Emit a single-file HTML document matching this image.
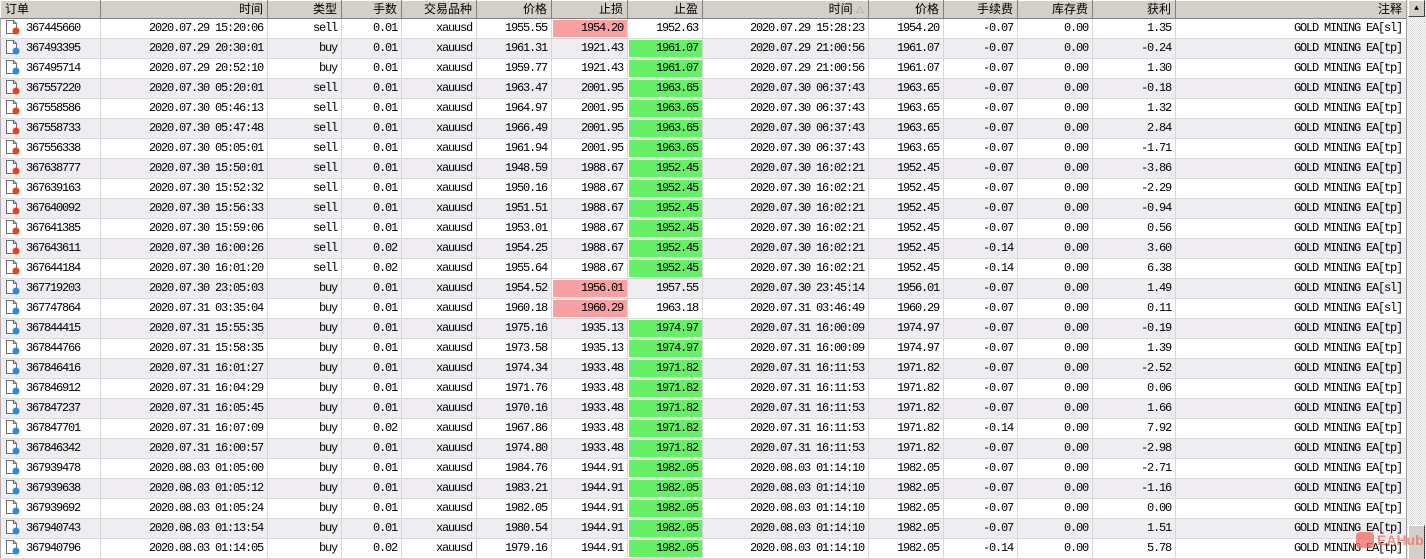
<!DOCTYPE html>
<html><head><meta charset="utf-8"><style>
body{margin:0;width:1426px;height:559px;overflow:hidden;background:#fff;font-family:"Liberation Mono","Noto Sans CJK SC",monospace;font-size:12px;letter-spacing:-1.2px;color:#000;position:relative}
table{border-collapse:collapse;table-layout:fixed;position:absolute;left:0;top:0;width:1406px}
th{height:17px;padding:0 4px 0 0;background:#d4d0c8;border-top:1px solid #fff;border-left:1px solid #fff;border-right:1px solid #808080;border-bottom:1px solid #808080;font-family:"Liberation Sans","Noto Sans CJK SC",sans-serif;font-weight:normal;font-size:12px;letter-spacing:0;text-align:right;line-height:15px}
th.l{text-align:left;padding-left:4px}
td{height:19px;padding:0 4px 0 0;border-right:1px solid #d8d8d8;border-bottom:1px solid #d8d8d8;text-align:right;white-space:nowrap;overflow:hidden;line-height:19px;background:#fff}
tbody tr:nth-child(even) td{background:#efedf2}
td.o{text-align:left;padding-left:4px;border-left:1px solid #b0b0b0}
td.o svg{vertical-align:-4px;margin-right:5px}
td.pk{background:#f8a0a2!important;box-shadow:inset 0 1px 0 #fff,inset 0 -1px 0 #fff,inset 1px 0 0 #fff}
td.gr{background:#66f066!important;box-shadow:inset 0 1px 0 #fff,inset 0 -1px 0 #fff,inset 1px 0 0 #fff}
.sb{position:absolute;left:1406px;top:0;width:20px;height:559px;background:repeating-conic-gradient(#d8d8d8 0 25%,#fff 0 50%) 0 0/2px 2px;border-left:1px solid #a0a0a0}
.up{position:absolute;left:1px;top:0;width:17px;height:17px;background:#d4d0c8;border-top:1px solid #fff;border-left:1px solid #fff;border-right:1px solid #404040;border-bottom:1px solid #404040;box-sizing:border-box;font-size:8px;text-align:center;line-height:15px;letter-spacing:0}
.th{position:absolute;left:1px;top:525px;width:17px;height:34px;background:#d4d0c8;border-top:1px solid #fff;border-left:1px solid #fff;border-right:1px solid #404040;box-sizing:border-box}
.wm{position:absolute;left:1356px;top:532px;color:#f26a5a;opacity:.75;font-family:"Liberation Sans",sans-serif;font-size:14px;font-weight:bold;letter-spacing:0}
</style></head><body>
<svg width="0" height="0" style="position:absolute"><defs>
<g id="d"><path d="M1.5 0.5h7l3 3v10h-10z" fill="#fff" stroke="#707070"/><path d="M8.5 0.5v3h3" fill="none" stroke="#707070"/></g>
</defs></svg>
<table>
<colgroup><col style="width:100px"><col style="width:167px"><col style="width:74px"><col style="width:60px"><col style="width:75px"><col style="width:75px"><col style="width:76px"><col style="width:75px"><col style="width:166px"><col style="width:75px"><col style="width:74px"><col style="width:75px"><col style="width:83px"><col style="width:231px"></colgroup>
<thead><tr><th class="l">订单</th><th>时间</th><th>类型</th><th>手数</th><th>交易品种</th><th>价格</th><th>止损</th><th>止盈</th><th>时间 <span style="font-size:8px;color:#808080">△</span></th><th>价格</th><th>手续费</th><th>库存费</th><th>获利</th><th>注释</th></tr></thead>
<tbody>
<tr><td class="o"><svg width="16" height="15"><use href="#d"/><circle cx="11" cy="11" r="3.5" fill="#e8401a"/></svg>367445660</td><td>2020.07.29 15:20:06</td><td>sell</td><td>0.01</td><td>xauusd</td><td>1955.55</td><td class="pk">1954.20</td><td>1952.63</td><td>2020.07.29 15:28:23</td><td>1954.20</td><td>-0.07</td><td>0.00</td><td>1.35</td><td>GOLD MINING EA[sl]</td></tr>
<tr><td class="o"><svg width="16" height="15"><use href="#d"/><circle cx="11" cy="11" r="3.5" fill="#2a8ae0"/></svg>367493395</td><td>2020.07.29 20:30:01</td><td>buy</td><td>0.01</td><td>xauusd</td><td>1961.31</td><td>1921.43</td><td class="gr">1961.07</td><td>2020.07.29 21:00:56</td><td>1961.07</td><td>-0.07</td><td>0.00</td><td>-0.24</td><td>GOLD MINING EA[tp]</td></tr>
<tr><td class="o"><svg width="16" height="15"><use href="#d"/><circle cx="11" cy="11" r="3.5" fill="#2a8ae0"/></svg>367495714</td><td>2020.07.29 20:52:10</td><td>buy</td><td>0.01</td><td>xauusd</td><td>1959.77</td><td>1921.43</td><td class="gr">1961.07</td><td>2020.07.29 21:00:56</td><td>1961.07</td><td>-0.07</td><td>0.00</td><td>1.30</td><td>GOLD MINING EA[tp]</td></tr>
<tr><td class="o"><svg width="16" height="15"><use href="#d"/><circle cx="11" cy="11" r="3.5" fill="#e8401a"/></svg>367557220</td><td>2020.07.30 05:20:01</td><td>sell</td><td>0.01</td><td>xauusd</td><td>1963.47</td><td>2001.95</td><td class="gr">1963.65</td><td>2020.07.30 06:37:43</td><td>1963.65</td><td>-0.07</td><td>0.00</td><td>-0.18</td><td>GOLD MINING EA[tp]</td></tr>
<tr><td class="o"><svg width="16" height="15"><use href="#d"/><circle cx="11" cy="11" r="3.5" fill="#e8401a"/></svg>367558586</td><td>2020.07.30 05:46:13</td><td>sell</td><td>0.01</td><td>xauusd</td><td>1964.97</td><td>2001.95</td><td class="gr">1963.65</td><td>2020.07.30 06:37:43</td><td>1963.65</td><td>-0.07</td><td>0.00</td><td>1.32</td><td>GOLD MINING EA[tp]</td></tr>
<tr><td class="o"><svg width="16" height="15"><use href="#d"/><circle cx="11" cy="11" r="3.5" fill="#e8401a"/></svg>367558733</td><td>2020.07.30 05:47:48</td><td>sell</td><td>0.01</td><td>xauusd</td><td>1966.49</td><td>2001.95</td><td class="gr">1963.65</td><td>2020.07.30 06:37:43</td><td>1963.65</td><td>-0.07</td><td>0.00</td><td>2.84</td><td>GOLD MINING EA[tp]</td></tr>
<tr><td class="o"><svg width="16" height="15"><use href="#d"/><circle cx="11" cy="11" r="3.5" fill="#e8401a"/></svg>367556338</td><td>2020.07.30 05:05:01</td><td>sell</td><td>0.01</td><td>xauusd</td><td>1961.94</td><td>2001.95</td><td class="gr">1963.65</td><td>2020.07.30 06:37:43</td><td>1963.65</td><td>-0.07</td><td>0.00</td><td>-1.71</td><td>GOLD MINING EA[tp]</td></tr>
<tr><td class="o"><svg width="16" height="15"><use href="#d"/><circle cx="11" cy="11" r="3.5" fill="#e8401a"/></svg>367638777</td><td>2020.07.30 15:50:01</td><td>sell</td><td>0.01</td><td>xauusd</td><td>1948.59</td><td>1988.67</td><td class="gr">1952.45</td><td>2020.07.30 16:02:21</td><td>1952.45</td><td>-0.07</td><td>0.00</td><td>-3.86</td><td>GOLD MINING EA[tp]</td></tr>
<tr><td class="o"><svg width="16" height="15"><use href="#d"/><circle cx="11" cy="11" r="3.5" fill="#e8401a"/></svg>367639163</td><td>2020.07.30 15:52:32</td><td>sell</td><td>0.01</td><td>xauusd</td><td>1950.16</td><td>1988.67</td><td class="gr">1952.45</td><td>2020.07.30 16:02:21</td><td>1952.45</td><td>-0.07</td><td>0.00</td><td>-2.29</td><td>GOLD MINING EA[tp]</td></tr>
<tr><td class="o"><svg width="16" height="15"><use href="#d"/><circle cx="11" cy="11" r="3.5" fill="#e8401a"/></svg>367640092</td><td>2020.07.30 15:56:33</td><td>sell</td><td>0.01</td><td>xauusd</td><td>1951.51</td><td>1988.67</td><td class="gr">1952.45</td><td>2020.07.30 16:02:21</td><td>1952.45</td><td>-0.07</td><td>0.00</td><td>-0.94</td><td>GOLD MINING EA[tp]</td></tr>
<tr><td class="o"><svg width="16" height="15"><use href="#d"/><circle cx="11" cy="11" r="3.5" fill="#e8401a"/></svg>367641385</td><td>2020.07.30 15:59:06</td><td>sell</td><td>0.01</td><td>xauusd</td><td>1953.01</td><td>1988.67</td><td class="gr">1952.45</td><td>2020.07.30 16:02:21</td><td>1952.45</td><td>-0.07</td><td>0.00</td><td>0.56</td><td>GOLD MINING EA[tp]</td></tr>
<tr><td class="o"><svg width="16" height="15"><use href="#d"/><circle cx="11" cy="11" r="3.5" fill="#e8401a"/></svg>367643611</td><td>2020.07.30 16:00:26</td><td>sell</td><td>0.02</td><td>xauusd</td><td>1954.25</td><td>1988.67</td><td class="gr">1952.45</td><td>2020.07.30 16:02:21</td><td>1952.45</td><td>-0.14</td><td>0.00</td><td>3.60</td><td>GOLD MINING EA[tp]</td></tr>
<tr><td class="o"><svg width="16" height="15"><use href="#d"/><circle cx="11" cy="11" r="3.5" fill="#e8401a"/></svg>367644184</td><td>2020.07.30 16:01:20</td><td>sell</td><td>0.02</td><td>xauusd</td><td>1955.64</td><td>1988.67</td><td class="gr">1952.45</td><td>2020.07.30 16:02:21</td><td>1952.45</td><td>-0.14</td><td>0.00</td><td>6.38</td><td>GOLD MINING EA[tp]</td></tr>
<tr><td class="o"><svg width="16" height="15"><use href="#d"/><circle cx="11" cy="11" r="3.5" fill="#2a8ae0"/></svg>367719203</td><td>2020.07.30 23:05:03</td><td>buy</td><td>0.01</td><td>xauusd</td><td>1954.52</td><td class="pk">1956.01</td><td>1957.55</td><td>2020.07.30 23:45:14</td><td>1956.01</td><td>-0.07</td><td>0.00</td><td>1.49</td><td>GOLD MINING EA[sl]</td></tr>
<tr><td class="o"><svg width="16" height="15"><use href="#d"/><circle cx="11" cy="11" r="3.5" fill="#2a8ae0"/></svg>367747864</td><td>2020.07.31 03:35:04</td><td>buy</td><td>0.01</td><td>xauusd</td><td>1960.18</td><td class="pk">1960.29</td><td>1963.18</td><td>2020.07.31 03:46:49</td><td>1960.29</td><td>-0.07</td><td>0.00</td><td>0.11</td><td>GOLD MINING EA[sl]</td></tr>
<tr><td class="o"><svg width="16" height="15"><use href="#d"/><circle cx="11" cy="11" r="3.5" fill="#2a8ae0"/></svg>367844415</td><td>2020.07.31 15:55:35</td><td>buy</td><td>0.01</td><td>xauusd</td><td>1975.16</td><td>1935.13</td><td class="gr">1974.97</td><td>2020.07.31 16:00:09</td><td>1974.97</td><td>-0.07</td><td>0.00</td><td>-0.19</td><td>GOLD MINING EA[tp]</td></tr>
<tr><td class="o"><svg width="16" height="15"><use href="#d"/><circle cx="11" cy="11" r="3.5" fill="#2a8ae0"/></svg>367844766</td><td>2020.07.31 15:58:35</td><td>buy</td><td>0.01</td><td>xauusd</td><td>1973.58</td><td>1935.13</td><td class="gr">1974.97</td><td>2020.07.31 16:00:09</td><td>1974.97</td><td>-0.07</td><td>0.00</td><td>1.39</td><td>GOLD MINING EA[tp]</td></tr>
<tr><td class="o"><svg width="16" height="15"><use href="#d"/><circle cx="11" cy="11" r="3.5" fill="#2a8ae0"/></svg>367846416</td><td>2020.07.31 16:01:27</td><td>buy</td><td>0.01</td><td>xauusd</td><td>1974.34</td><td>1933.48</td><td class="gr">1971.82</td><td>2020.07.31 16:11:53</td><td>1971.82</td><td>-0.07</td><td>0.00</td><td>-2.52</td><td>GOLD MINING EA[tp]</td></tr>
<tr><td class="o"><svg width="16" height="15"><use href="#d"/><circle cx="11" cy="11" r="3.5" fill="#2a8ae0"/></svg>367846912</td><td>2020.07.31 16:04:29</td><td>buy</td><td>0.01</td><td>xauusd</td><td>1971.76</td><td>1933.48</td><td class="gr">1971.82</td><td>2020.07.31 16:11:53</td><td>1971.82</td><td>-0.07</td><td>0.00</td><td>0.06</td><td>GOLD MINING EA[tp]</td></tr>
<tr><td class="o"><svg width="16" height="15"><use href="#d"/><circle cx="11" cy="11" r="3.5" fill="#2a8ae0"/></svg>367847237</td><td>2020.07.31 16:05:45</td><td>buy</td><td>0.01</td><td>xauusd</td><td>1970.16</td><td>1933.48</td><td class="gr">1971.82</td><td>2020.07.31 16:11:53</td><td>1971.82</td><td>-0.07</td><td>0.00</td><td>1.66</td><td>GOLD MINING EA[tp]</td></tr>
<tr><td class="o"><svg width="16" height="15"><use href="#d"/><circle cx="11" cy="11" r="3.5" fill="#2a8ae0"/></svg>367847701</td><td>2020.07.31 16:07:09</td><td>buy</td><td>0.02</td><td>xauusd</td><td>1967.86</td><td>1933.48</td><td class="gr">1971.82</td><td>2020.07.31 16:11:53</td><td>1971.82</td><td>-0.14</td><td>0.00</td><td>7.92</td><td>GOLD MINING EA[tp]</td></tr>
<tr><td class="o"><svg width="16" height="15"><use href="#d"/><circle cx="11" cy="11" r="3.5" fill="#2a8ae0"/></svg>367846342</td><td>2020.07.31 16:00:57</td><td>buy</td><td>0.01</td><td>xauusd</td><td>1974.80</td><td>1933.48</td><td class="gr">1971.82</td><td>2020.07.31 16:11:53</td><td>1971.82</td><td>-0.07</td><td>0.00</td><td>-2.98</td><td>GOLD MINING EA[tp]</td></tr>
<tr><td class="o"><svg width="16" height="15"><use href="#d"/><circle cx="11" cy="11" r="3.5" fill="#2a8ae0"/></svg>367939478</td><td>2020.08.03 01:05:00</td><td>buy</td><td>0.01</td><td>xauusd</td><td>1984.76</td><td>1944.91</td><td class="gr">1982.05</td><td>2020.08.03 01:14:10</td><td>1982.05</td><td>-0.07</td><td>0.00</td><td>-2.71</td><td>GOLD MINING EA[tp]</td></tr>
<tr><td class="o"><svg width="16" height="15"><use href="#d"/><circle cx="11" cy="11" r="3.5" fill="#2a8ae0"/></svg>367939638</td><td>2020.08.03 01:05:12</td><td>buy</td><td>0.01</td><td>xauusd</td><td>1983.21</td><td>1944.91</td><td class="gr">1982.05</td><td>2020.08.03 01:14:10</td><td>1982.05</td><td>-0.07</td><td>0.00</td><td>-1.16</td><td>GOLD MINING EA[tp]</td></tr>
<tr><td class="o"><svg width="16" height="15"><use href="#d"/><circle cx="11" cy="11" r="3.5" fill="#2a8ae0"/></svg>367939692</td><td>2020.08.03 01:05:24</td><td>buy</td><td>0.01</td><td>xauusd</td><td>1982.05</td><td>1944.91</td><td class="gr">1982.05</td><td>2020.08.03 01:14:10</td><td>1982.05</td><td>-0.07</td><td>0.00</td><td>0.00</td><td>GOLD MINING EA[tp]</td></tr>
<tr><td class="o"><svg width="16" height="15"><use href="#d"/><circle cx="11" cy="11" r="3.5" fill="#2a8ae0"/></svg>367940743</td><td>2020.08.03 01:13:54</td><td>buy</td><td>0.01</td><td>xauusd</td><td>1980.54</td><td>1944.91</td><td class="gr">1982.05</td><td>2020.08.03 01:14:10</td><td>1982.05</td><td>-0.07</td><td>0.00</td><td>1.51</td><td>GOLD MINING EA[tp]</td></tr>
<tr><td class="o"><svg width="16" height="15"><use href="#d"/><circle cx="11" cy="11" r="3.5" fill="#2a8ae0"/></svg>367940796</td><td>2020.08.03 01:14:05</td><td>buy</td><td>0.02</td><td>xauusd</td><td>1979.16</td><td>1944.91</td><td class="gr">1982.05</td><td>2020.08.03 01:14:10</td><td>1982.05</td><td>-0.14</td><td>0.00</td><td>5.78</td><td>GOLD MINING EA[tp]</td></tr>
</tbody>
</table>
<div class="sb"><div class="up">▲</div><div class="th"></div></div>
<div class="wm"><span style="display:inline-block;width:18px;height:16px;background:#f26a5a;border-radius:4px;vertical-align:-3px;margin-right:3px"></span>EAHub</div>
</body></html>
